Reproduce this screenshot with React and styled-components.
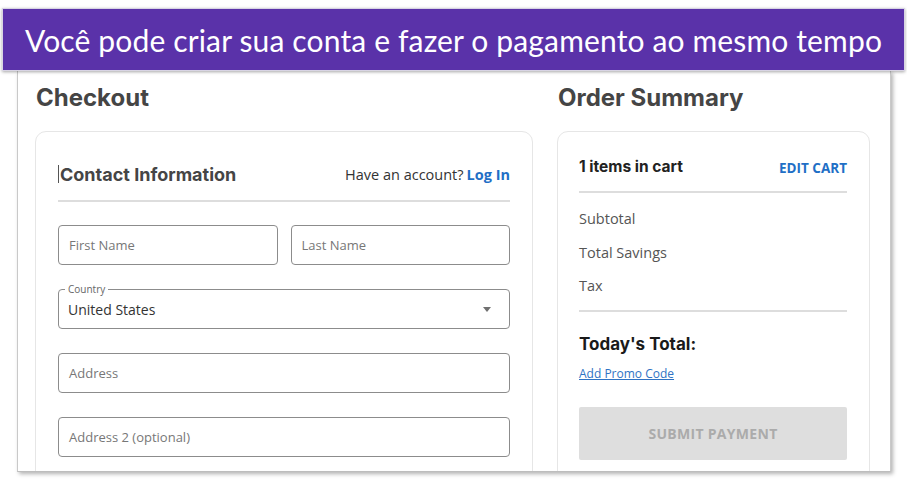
import styled, { createGlobalStyle } from 'styled-components'

const GlobalStyle = createGlobalStyle`
  html, body {
    margin: 0;
    padding: 0;
    background: #ffffff;
  }
  body {
    font-family: "Open Sans", "Noto Sans", sans-serif;
    width: 907px;
    height: 484px;
    overflow: hidden;
  }
`

const Page = styled.div`
  padding-top: 8px;
`

const Banner = styled.div`
  position: relative;
  z-index: 2;
  margin: 0 2px;
  height: 61px;
  background: #5a32a9;
  border: 1px solid #d8d4e4;
  box-shadow: 0 1px 3px rgba(0, 0, 0, 0.35);
  display: flex;
  align-items: center;
  justify-content: center;

  font-family: Lato, "Noto Sans", sans-serif;
  font-size: 30px;
  color: #ffffff;
  letter-spacing: 0.15px;
`

const Frame = styled.div`
  margin: 0 16px 0 17px;
  height: 401px;
  overflow: hidden;
  background: #ffffff;
  border-left: 1px solid #c9c9c9;
  border-right: 1px solid #c9c9c9;
  border-bottom: 1px solid #bdbdbd;
  box-shadow: 2px 2px 4px rgba(0, 0, 0, 0.3);

  display: grid;
  grid-template-columns: 498px 313px;
  column-gap: 24px;
  padding: 13px 0 0 17px;
  box-sizing: border-box;
`

const Column = styled.div`
  display: flex;
  flex-direction: column;
`

const Heading = styled.h2`
  margin: 0 0 19px 1px;
  height: 28px;
  line-height: 28px;
  font-family: Inter, "Noto Sans", sans-serif;
  font-weight: 700;
  font-size: 24px;
  color: #454545;
`

const Card = styled.div`
  border: 1px solid #e6e6e6;
  border-radius: 11px;
  padding: ${p => p.$pad};
  height: 400px;
  box-sizing: border-box;
`

const HeaderRow = styled.div`
  display: flex;
  align-items: center;
  justify-content: space-between;
  height: 28px;
`

const SectionTitle = styled.div`
  display: flex;
  align-items: center;
  font-family: Inter, "Noto Sans", sans-serif;
  font-weight: 700;
  font-size: ${p => p.$size || 18}px;
  color: ${p => p.$color || '#454545'};
`

const Caret = styled.span`
  display: inline-block;
  width: 1px;
  height: 18px;
  background: #555;
  margin-right: 1px;
`

const AccountText = styled.div`
  font-size: 14.5px;
  color: #333;

  a {
    color: #1f6fc6;
    font-weight: 700;
    text-decoration: none;
    margin-left: 3px;
  }
`

const Divider = styled.div`
  height: 2px;
  background: #dddddd;
  margin: ${p => p.$m};
`

const Fields = styled.div`
  display: flex;
  flex-direction: column;
  gap: 24px;
`

const Row = styled.div`
  display: grid;
  grid-template-columns: 1fr 1fr;
  gap: 13px;
`

const Input = styled.div`
  height: 40px;
  box-sizing: border-box;
  border: 1px solid #8c8c8c;
  border-radius: 4px;
  display: flex;
  align-items: center;
  padding-left: 10px;
  font-size: 13px;
  color: #777;
`

const Select = styled.div`
  position: relative;
  height: 40px;
  box-sizing: border-box;
  border: 1px solid #8c8c8c;
  border-radius: 4px;
  padding: 0 18px 0 9px;
  display: flex;
  align-items: center;
  justify-content: space-between;
`

const FloatLabel = styled.span`
  position: absolute;
  top: -6px;
  left: 6px;
  padding: 0 3px;
  background: #ffffff;
  font-size: 10px;
  line-height: 11px;
  color: #666;
`

const SelectValue = styled.span`
  font-size: 14px;
  color: #333;
`

const Arrow = styled.span`
  width: 0;
  height: 0;
  border-left: 4.5px solid transparent;
  border-right: 4.5px solid transparent;
  border-top: 5px solid #707070;
`

const EditCart = styled.a`
  font-size: 13.5px;
  font-weight: 700;
  color: #1f6fc6;
  text-decoration: none;
  margin-top: 4px;
`

const Lines = styled.div`
  display: flex;
  flex-direction: column;
  gap: 11.5px;
  margin-top: 15px;
`

const Line = styled.div`
  height: 22px;
  line-height: 22px;
  font-size: 14.5px;
  color: #555;
`

const TotalRow = styled.div`
  margin-top: 19px;
  height: 26px;
  line-height: 26px;
`

const Promo = styled.a`
  display: block;
  margin-top: 8px;
  font-size: 12px;
  color: #2f73c4;
  text-decoration: underline;
`

const SubmitButton = styled.button`
  margin-top: 25px;
  width: 100%;
  height: 53px;
  border: none;
  border-radius: 2px;
  background: #dedede;
  color: #ababab;
  font-family: "Open Sans", "Noto Sans", sans-serif;
  font-weight: 700;
  font-size: 14px;
  letter-spacing: 0.3px;
`

export default function App() {
  return (
    <Page>
      <GlobalStyle />
      <Banner>Você pode criar sua conta e fazer o pagamento ao mesmo tempo</Banner>
      <Frame>
        <Column>
          <Heading>Checkout</Heading>
          <Card $pad="28px 22px 0 22px">
            <HeaderRow>
              <SectionTitle>
                <Caret />
                Contact Information
              </SectionTitle>
              <AccountText>
                Have an account?<a href="#">Log In</a>
              </AccountText>
            </HeaderRow>
            <Divider $m="12px 0 23px" />
            <Fields>
              <Row>
                <Input>First Name</Input>
                <Input>Last Name</Input>
              </Row>
              <Select>
                <FloatLabel>Country</FloatLabel>
                <SelectValue>United States</SelectValue>
                <Arrow />
              </Select>
              <Input>Address</Input>
              <Input>Address 2 (optional)</Input>
            </Fields>
          </Card>
        </Column>
        <Column>
          <Heading>Order Summary</Heading>
          <Card $pad="20px 22px 0 21px">
            <HeaderRow>
              <SectionTitle $size={15.5} $color="#222">1 items in cart</SectionTitle>
              <EditCart href="#">EDIT CART</EditCart>
            </HeaderRow>
            <Divider $m="11px 0 0" />
            <Lines>
              <Line>Subtotal</Line>
              <Line>Total Savings</Line>
              <Line>Tax</Line>
            </Lines>
            <Divider $m="13px 0 0" />
            <TotalRow>
              <SectionTitle $size={17} $color="#1a1a1a">Today's Total:</SectionTitle>
            </TotalRow>
            <Promo href="#">Add Promo Code</Promo>
            <SubmitButton>SUBMIT PAYMENT</SubmitButton>
          </Card>
        </Column>
      </Frame>
    </Page>
  )
}
